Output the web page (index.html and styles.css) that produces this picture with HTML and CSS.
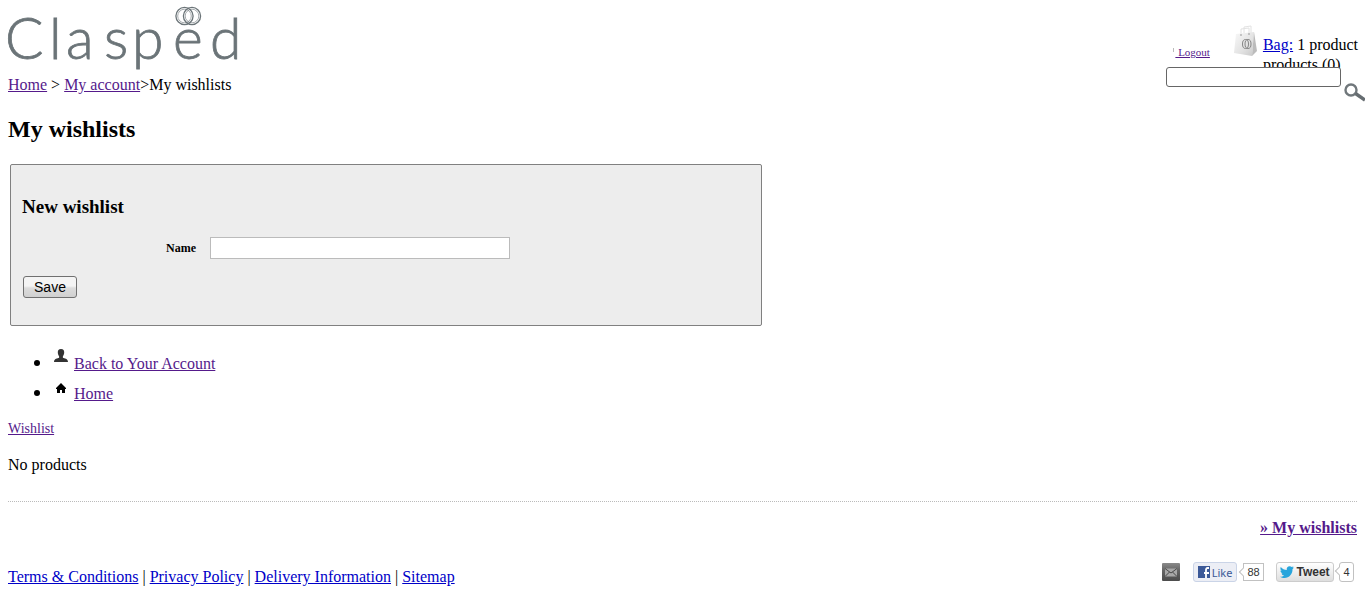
FILE: index.html
```html
<!DOCTYPE html>
<html lang="en">
<head>
<meta charset="utf-8">
<title>My wishlists - Clasped</title>
<link rel="stylesheet" href="styles.css">
</head>
<body>
<header class="header">
  <div class="brand">
    <a class="logo" href="#" aria-label="Clasped">
      <svg width="236" height="66" viewBox="8 5 236 66">
        <text class="logo-text" y="59" x="5 49 66 104 132 173 210">Clasped</text>
        <g fill="none" stroke="#6b7478" stroke-width="1.3">
          <circle cx="184.500" cy="16" r="8.600"/>
          <circle cx="192" cy="16" r="8.600"/>
          <circle cx="184.500" cy="16" r="6.800" stroke-width=".6"/>
          <circle cx="192" cy="16" r="6.800" stroke-width=".6"/>
        </g>
      </svg>
    </a>
    <nav class="breadcrumb"><a class="visited" href="#">Home</a> &gt; <a class="visited" href="#">My account</a>&gt;My wishlists</nav>
  </div>
  <div class="tools">
    <div class="user">
      <a class="logout visited" href="#">&nbsp;Logout</a>
      <svg class="bag-icon" width="26" height="32" viewBox="0 0 26 32">
        <defs><linearGradient id="bag" x1="0" y1="0" x2="1" y2="1"><stop offset="0" stop-color="#f9f9f9"/><stop offset=".6" stop-color="#e2e2e2"/><stop offset="1" stop-color="#c8c8c8"/></linearGradient></defs>
        <path d="M7 10V4l8-1v7M10 8V2l7-1v7" fill="none" stroke="#e2e2e2"/>
        <path d="M2 9L20 7l-2 24-18-3z" fill="url(#bag)"/>
        <path d="M20 7l3 19-5 5z" fill="#bcbcbc"/>
        <g fill="none" stroke="#858585"><ellipse cx="11.500" cy="19" rx="3" ry="4.500"/><ellipse cx="14" cy="19" rx="3" ry="4.500"/></g>
        <path d="M7 9v2M15 8v2" stroke="#999"/>
      </svg>
      <div class="bag"><a href="#">Bag:</a> 1 product<br>products (0)</div>
    </div>
    <form class="search">
      <input class="search-box" type="text" aria-label="Search">
      <button class="search-button" type="button" aria-label="Search">
        <svg width="21" height="19" viewBox="0 0 21 19"><circle cx="7" cy="7" r="5.500" fill="none" stroke="#70777b" stroke-width="2.400"/><path d="M11.500 10.500L21 17" stroke="#666d71" stroke-width="3.500"/></svg>
      </button>
    </form>
  </div>
</header>
<main>
  <h1 class="title">My wishlists</h1>
  <form class="panel">
    <h2 class="panel-title">New wishlist</h2>
    <div class="field">
      <label class="label" for="name">Name</label>
      <input class="name-box" id="name" type="text">
    </div>
    <button class="save" type="button">Save</button>
  </form>
  <ul class="links">
    <li><span class="entry"><svg width="16" height="16" viewBox="0 0 16 16"><path d="M8 1c2.500 0 3.200 1.500 3.200 3.300 0 1.700-.6 3-1.300 3.900v1.600c1.500.7 5.100.6 5.100 4.200H1c0-3.600 3.600-3.500 5.100-4.200V8.200C5.400 7.300 4.800 6 4.800 4.300 4.800 2.500 5.500 1 8 1z" fill="#333"/></svg><a class="visited" href="#">Back to Your Account</a></span></li>
    <li><span class="entry"><svg width="16" height="16" viewBox="0 0 16 16"><path d="M8 5l5 5v1h-1v4H9v-3H7v3H4v-4H3v-1z" fill="#000"/></svg><a class="visited" href="#">Home</a></span></li>
  </ul>
  <a class="wishlist visited" href="#">Wishlist</a>
  <p class="empty">No products</p>
</main>
<div class="more"><a class="visited" href="#">» My wishlists</a></div>
<footer class="footer">
  <nav class="legal"><a href="#">Terms &amp; Conditions</a> | <a href="#">Privacy Policy</a> | <a href="#">Delivery Information</a> | <a href="#">Sitemap</a></nav>
  <div class="social">
    <a class="mail" href="#" aria-label="Email">
      <svg width="18" height="18" viewBox="0 0 18 18"><defs><linearGradient id="mail" x2="0" y2="1"><stop stop-color="#8a8a8a"/><stop offset=".4" stop-color="#666"/><stop offset="1" stop-color="#4c4c4c"/></linearGradient></defs><rect width="18" height="18" rx="1" fill="url(#mail)"/><path d="M3 5.500h12v8H3z" fill="#a8a8a8"/><path d="M3 5.500l6 4.500 6-4.500M3 13.500l4.500-4.500M15 13.500L10.500 9" fill="none" stroke="#484848"/></svg>
    </a>
    <button class="like" type="button"><svg width="12" height="12" viewBox="0 0 12 12"><path fill="#3b5998" d="M0 0h12v12H0z"/><path d="M8 12V7h3M11 2H9.500Q8 2 8 4v3H6" fill="none" stroke="#fff" stroke-width="1.800"/></svg>Like</button>
    <span class="count like-count">88</span>
    <button class="tweet" type="button"><svg width="14" height="12" viewBox="0 0 14 12"><path fill="#28a5dc" d="M14 1.500l-1.500 1.800C12.700 8 9.300 12 4.500 12 2.800 12 1.300 11.500 0 10.700c1.500.1 3-.3 4.100-1.200-1.200 0-2.200-.8-2.600-2h1.200C1.300 7.200.4 6 .4 4.600l1.300.4C.4 4.100 0 2.500.8 1.100c1.500 1.800 3.600 2.900 6 3C6.300 1.800 7.800.2 9.600.2c.9 0 1.600.3 2.100.9L13.500.5l-1 1.300z"/></svg>Tweet</button>
    <span class="count tweet-count">4</span>
  </div>
</footer>
</body>
</html>
```
FILE: styles.css
```css
body {
  margin: 0;
  padding: 5px 8px 0;
  background: #fff;
  color: #000;
  font: 16px/20px "Liberation Serif", "Times New Roman", serif;
}
a { color: #0000c8; }
.visited { color: #551a8b; }
button, input { box-sizing: border-box; margin: 0; }
svg { display: block; flex: none; overflow: visible; }

.header { display: flex; justify-content: space-between; }
.logo { display: block; margin-bottom: 4px; }
.logo-text { font: 300 57px Lato, sans-serif; fill: #6b7478; stroke: #6b7478; stroke-width: 0.8; }
.tools { display: flex; flex-direction: column; align-items: flex-end; margin-right: -8px; }
.user { display: flex; height: 42px; padding: 20px 7px 0 0; }
.logout { position: relative; margin: 17px 24px 0 0; font-size: 11px; line-height: 20px; }
.logout::before { content: ""; position: absolute; top: 6px; left: -2px; width: 1px; height: 4px; background: #bbb; }
.bag { margin: 10px 0 0 3px; }
.search { position: relative; display: flex; align-items: flex-start; gap: 3px; }
.search-box { width: 175px; height: 20px; padding: 0 4px; border: 1px solid #666; border-radius: 3px; background: #fff; }
.search-button { margin-top: 16px; padding: 0; border: 0; background: none; }

.title { margin: 13px 0 21px; font-size: 24px; line-height: 28px; }
.panel { box-sizing: border-box; max-width: 752px; margin: 0 2px; padding: 32px 11px 27px; border: 1px solid #808080; border-radius: 2px; background: #ededed; }
.panel-title { margin: 0 0 20px; font-size: 19px; line-height: 20px; }
.field { display: flex; align-items: center; gap: 14px; margin-bottom: 17px; }
.label { width: 174px; font-size: 12px; font-weight: bold; text-align: right; }
.name-box { width: 300px; height: 22px; padding: 0 4px; border: 1px solid #bbb; background: #fff; }
.save { display: block; width: 54px; height: 22px; margin-left: 1px; padding: 0; border: 1px solid #707070; border-radius: 3px; background: linear-gradient(#f4f4f4 45%, #dcdcdc 55%, #d0d0d0); font: 14px "Liberation Sans", Arial, sans-serif; }

.links { margin: 20px 0 12px; padding-left: 45px; }
.links li { padding: 6px 0 2px; }
.links li::marker { font-size: 20px; }
.entry { display: inline-flex; gap: 5px; vertical-align: top; }
.entry svg { margin-top: -6px; }
.wishlist { font-size: 14px; }
.empty { margin: 16px 0 26px; }
.more { padding-top: 16px; border-top: 1px dotted #bbb; font-weight: bold; text-align: right; }
.footer { display: flex; justify-content: space-between; align-items: flex-start; padding-top: 24px; }
.legal { padding-top: 5px; }
.social { display: flex; align-items: center; margin-right: 3px; font: 11px "Liberation Sans", Arial, sans-serif; }
.mail { margin-right: 13px; }
.like, .tweet { display: flex; align-items: center; justify-content: center; gap: 2px; height: 20px; padding: 0; border-radius: 3px; }
.like { width: 44px; border: 1px solid #cad4e7; background: #eceef5; color: #3b5998; font: 11px "Noto Sans", Tahoma, sans-serif; }
.tweet { width: 58px; margin-left: 12px; border: 1px solid #ccc; background: linear-gradient(#fff, #dedede); color: #333; font: bold 12px "Liberation Sans", Arial, sans-serif; }
.count { position: relative; box-sizing: border-box; height: 18px; border: 1px solid #c1c1c1; line-height: 16px; color: #333; text-align: center; }
.count::before { content: ""; position: absolute; top: 5px; left: -4px; width: 5px; height: 5px; border: solid #c1c1c1; border-width: 0 0 1px 1px; background: #fff; transform: rotate(45deg); }
.like-count { width: 21px; margin-left: 6px; }
.tweet-count { width: 15px; height: 20px; margin-left: 5px; border-radius: 3px; line-height: 18px; }
```
